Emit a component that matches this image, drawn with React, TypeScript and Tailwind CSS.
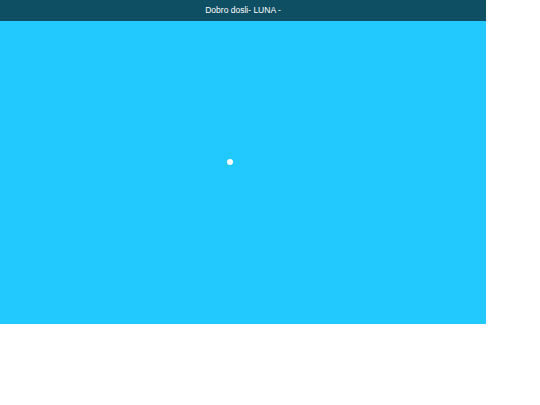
import React from 'react';

const App: React.FC = () => {
    return (
        <div className="w-[486px] bg-white" style={{ fontFamily: '"Liberation Sans", Arial, sans-serif' }}>
            <div className="h-[21px] bg-[#0f4f63] flex items-center justify-center">
                <span className="text-[8.5px] text-white leading-none">Dobro dosli- LUNA -</span>
            </div>
            <div className="h-[303px] bg-[#22c9ff] relative">
                {/* loading dot */}
                <div className="absolute left-[227px] top-[138px] w-[6px] h-[6px] rounded-full bg-white" />
            </div>
        </div>
    );
};

export default App;
